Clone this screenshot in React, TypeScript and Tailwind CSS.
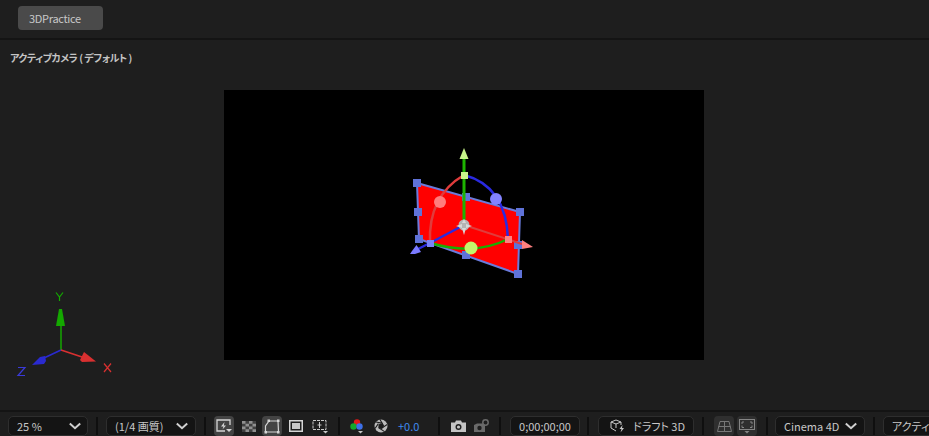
import React from "react";

function Chevron() {
  return (
    <svg width="12" height="8" viewBox="0 0 12 8" className="shrink-0">
      <path d="M0.8 1.5 L6 6.2 L11.2 1.5" fill="none" stroke="#d0d0d0" strokeWidth="2" />
    </svg>
  );
}

function Sep() {
  return <div className="h-[18px] w-[2px] shrink-0 bg-[#0f0f0f]" />;
}

function Pill({ className, children }: { className: string; children: React.ReactNode }) {
  return (
    <div className={`flex h-[20px] shrink-0 items-center rounded-[5px] border border-[#2e2e2e] bg-[#141414] text-[11px] leading-none text-[#c8c8c8] ${className}`}>
      {children}
    </div>
  );
}

function IconBox({ tone, children, className }: { tone?: "on" | "dim"; children: React.ReactNode; className?: string }) {
  const bg = tone === "on" ? "bg-[#434343]" : tone === "dim" ? "bg-[#2f2f2f]" : "";
  return (
    <div className={`flex h-[20px] w-[20px] shrink-0 items-center justify-center rounded-[4px] ${bg} ${className ?? ""}`}>
      {children}
    </div>
  );
}

function Gizmo() {
  const h = "#6a7bdc";
  const squares = [[417, 183], [520, 212], [518, 274], [419, 239], [418, 212], [466, 197], [518, 245], [466, 255]];
  return (
    <svg width="480" height="270" viewBox="224 90 480 270" className="block">
      <polygon points="417,183 520,212 518,274 419,239" fill="#ff0000" stroke={h} strokeWidth="2" />
      {squares.map(([x, y]) => (
        <rect key={`${x}-${y}`} x={x - 4} y={y - 4} width="8" height="8" fill="#5f72d8" />
      ))}
      <path d="M430 243 Q 475 256 508 239" fill="none" stroke="#17b000" strokeWidth="2.5" />
      <path d="M430 243 Q 428 196 464 175" fill="none" stroke="#e03c3c" strokeWidth="2.5" />
      <path d="M464 175 Q 506 186 508 239" fill="none" stroke="#2a2ae0" strokeWidth="2.5" />
      <line x1="464" y1="225" x2="464" y2="158" stroke="#1db400" strokeWidth="3" />
      <line x1="464" y1="225" x2="430" y2="243" stroke="#2a2ae0" strokeWidth="2.5" />
      <line x1="430" y1="243" x2="416" y2="250" stroke="#2a2ae0" strokeWidth="2.5" />
      <line x1="464" y1="225" x2="522" y2="244" stroke="#e03c3c" strokeWidth="2" />
      <polygon points="464,148 459.5,159 468.5,159" fill="#c8f58a" />
      <polygon points="410,254 412,251 416.5,245 421,252 415,254" fill="#7a7aff" />
      <polygon points="522,240 533,247 522,249" fill="#ff8080" />
      <rect x="461" y="172" width="7" height="7" fill="#c8f58a" />
      <rect x="427" y="240" width="7" height="7" fill="#7a84f8" />
      <rect x="505" y="236" width="7" height="7" fill="#ff8080" />
      <circle cx="440" cy="202" r="6" fill="#ff7d7d" />
      <circle cx="496" cy="199" r="6" fill="#8383ff" />
      <circle cx="471" cy="248" r="6.5" fill="#c3f56c" />
      <circle cx="464" cy="225" r="5.5" fill="#b4b4b4" />
      <polygon points="464,235 462,228 466,228" fill="#d8d8d8" />
      <polygon points="456,226 462,224 462,228" fill="#d8d8d8" />
      <polygon points="472,226 466,224 466,228" fill="#d8d8d8" />
      <polygon points="464,219 462,223 466,223" fill="#d8d8d8" />
    </svg>
  );
}

function Axes() {
  return (
    <svg width="100" height="90" viewBox="15 290 100 90" className="block">
      <line x1="61" y1="350" x2="61" y2="322" stroke="#14a800" strokeWidth="1.5" />
      <polygon points="59,309 62,309 65,326 56,326" fill="#14a800" />
      <line x1="61" y1="350" x2="44" y2="358" stroke="#2a2ad0" strokeWidth="1.5" />
      <polygon points="32,365 40,357 45,356 46,361 44,364" fill="#2a2ad0" />
      <line x1="61" y1="350" x2="82" y2="357" stroke="#d93030" strokeWidth="1.5" />
      <polygon points="96,361.5 84,352 80,360 82,362" fill="#d93030" />
      <path d="M56 292.5 L59.5 297 L63 292.5 M59.5 297 V301" fill="none" stroke="#14a800" strokeWidth="1.2" />
      <path d="M18 367.5 H25 L18 375.5 H25" fill="none" stroke="#3a3ad8" strokeWidth="1.2" />
      <path d="M104 363.5 L111 372 M111 363.5 L104 372" fill="none" stroke="#d93030" strokeWidth="1.2" />
    </svg>
  );
}

export default function App() {
  return (
    <div className="flex h-[436px] w-[929px] flex-col overflow-hidden bg-[#1e1e1e] font-['Noto_Sans_CJK_JP','Noto_Sans',sans-serif] [font-feature-settings:'palt']">
      <div className="flex h-[38px] shrink-0 items-center pb-[2px] pl-[18px]">
        <div className="flex h-[24px] w-[85px] items-center rounded-[4px] bg-[#4a4a4a] pl-[11px] text-[11px] leading-none tracking-[-0.3px] text-[#c8c8c8]">
          3DPractice
        </div>
      </div>
      <div className="h-[2px] shrink-0 bg-[#141414]" />

      <div className="relative flex min-h-0 flex-1 items-center justify-center pr-[1px]">
        <div className="absolute left-[10px] top-[10px] text-[10px] font-bold leading-[16px] tracking-[-0.45px] text-[#c4c4c4]">アクティブカメラ ( デフォルト )</div>
        <div className="bg-black">
          <Gizmo />
        </div>
        <div className="absolute left-[15px] top-[250px]">
          <Axes />
        </div>
      </div>

      <div className="h-[2px] shrink-0 bg-[#141414]" />
      <div className="flex h-[24px] shrink-0 items-center pl-[8px] pt-[4px]">
        <Pill className="w-[80px] justify-between pl-[8px] pr-[6px]">
          <span>25 %</span>
          <Chevron />
        </Pill>
        <div className="mx-[8px]"><Sep /></div>
        <Pill className="w-[90px] justify-between pl-[8px] pr-[7px]">
          <span>(1/4 画質)</span>
          <Chevron />
        </Pill>
        <div className="mx-[8px]"><Sep /></div>

        <IconBox tone="on">
          <svg width="16" height="14" viewBox="0 0 16 14">
            <path d="M14 6 V1 H1 V12 H9" fill="none" stroke="#d5d5d5" strokeWidth="1.3" />
            <path d="M8.5 3 L5 7.5 H7.5 L6.5 10.5 L10 6.5 H7.8 Z" fill="#d5d5d5" />
            <path d="M10 10 H16 L13 13 Z" fill="#d5d5d5" />
          </svg>
        </IconBox>
        <IconBox className="ml-[5px]">
          <svg width="14" height="11" viewBox="0 0 14 11">
            <rect width="14" height="11" fill="#3f3f3f" />
            <rect x="0" y="0" width="3.5" height="2.75" fill="#8f8f8f" />
            <rect x="7" y="0" width="3.5" height="2.75" fill="#8f8f8f" />
            <rect x="3.5" y="2.75" width="3.5" height="2.75" fill="#8f8f8f" />
            <rect x="10.5" y="2.75" width="3.5" height="2.75" fill="#8f8f8f" />
            <rect x="0" y="5.5" width="3.5" height="2.75" fill="#8f8f8f" />
            <rect x="7" y="5.5" width="3.5" height="2.75" fill="#8f8f8f" />
            <rect x="3.5" y="8.25" width="3.5" height="2.75" fill="#8f8f8f" />
            <rect x="10.5" y="8.25" width="3.5" height="2.75" fill="#8f8f8f" />
          </svg>
        </IconBox>
        <IconBox tone="on" className="ml-[3px]">
          <svg width="16" height="15" viewBox="0 0 16 15">
            <path d="M5 2 H14 L14.5 13 H1.5 V7 Z" fill="none" stroke="#d5d5d5" strokeWidth="1.2" />
            <rect x="3.5" y="0.5" width="2.5" height="2.5" fill="#d5d5d5" />
            <rect x="13" y="0.5" width="2.5" height="2.5" fill="#d5d5d5" />
            <rect x="0.5" y="12" width="2.5" height="2.5" fill="#d5d5d5" />
            <rect x="13" y="12" width="2.5" height="2.5" fill="#d5d5d5" />
          </svg>
        </IconBox>
        <IconBox className="ml-[4px]">
          <svg width="14" height="12" viewBox="0 0 14 12">
            <rect x="0.75" y="0.75" width="12.5" height="10.5" fill="none" stroke="#d5d5d5" strokeWidth="1.5" />
            <rect x="3" y="3" width="8" height="6" fill="#c8c8c8" />
          </svg>
        </IconBox>
        <IconBox className="ml-[4px]">
          <svg width="17" height="15" viewBox="0 0 17 15">
            <rect x="1" y="1.5" width="13" height="9" fill="none" stroke="#c8c8c8" strokeWidth="1" strokeDasharray="3 1" />
            <path d="M7.5 3 V9 M5.5 6 H9.5" stroke="#c8c8c8" strokeWidth="1" />
            <path d="M11 12 H16 L13.5 14.5 Z" fill="#c8c8c8" />
          </svg>
        </IconBox>
        <div className="ml-[8px] mr-[9px]"><Sep /></div>

        <svg width="17" height="16" viewBox="0 0 17 16" className="shrink-0">
          <circle cx="8" cy="4.5" r="3.2" fill="#e01818" />
          <circle cx="4.5" cy="8.5" r="3.2" fill="#12a82a" />
          <circle cx="10.5" cy="8.5" r="3.2" fill="#3d70e8" />
          <path d="M9 13 H14 L11.5 15.5 Z" fill="#c8c8c8" />
        </svg>
        <svg width="14" height="14" viewBox="0 0 14 14" className="ml-[8px] shrink-0">
          <circle cx="7" cy="7" r="6.5" fill="#bcbcbc" />
          <circle cx="7" cy="7" r="2.6" fill="#1e1e1e" />
          <path d="M6 0.5 L9.6 7 M13.2 5.5 L7 9.6 M10.5 12.6 L4.4 8.5 M1 9.5 L4.4 4.6 M2 3 L9 4.4" stroke="#1e1e1e" strokeWidth="1.1" fill="none" />
        </svg>
        <span className="ml-[10px] w-[21px] shrink-0 text-[11px] leading-none text-[#3f8cf0]">+0.0</span>
        <div className="ml-[19px] mr-[11px]"><Sep /></div>

        <svg width="15" height="12" viewBox="0 0 15 12" className="shrink-0">
          <path d="M0 2.5 H4 L5 0.5 H10 L11 2.5 H15 V12 H0 Z" fill="#c4c4c4" />
          <circle cx="7.5" cy="7" r="3" fill="#1e1e1e" />
          <circle cx="7.5" cy="7" r="1.6" fill="#c4c4c4" />
        </svg>
        <svg width="16" height="14" viewBox="0 0 16 14" className="ml-[8px] shrink-0">
          <path d="M0 6 L3 4.5 H9 L11 6 V13 H0 Z" fill="#6a6a6a" />
          <circle cx="5.5" cy="9" r="2.2" fill="#1e1e1e" />
          <circle cx="11.5" cy="3.5" r="2.7" fill="none" stroke="#6a6a6a" strokeWidth="1.5" />
        </svg>
        <div className="ml-[9px] mr-[9px]"><Sep /></div>

        <Pill className="w-[70px] justify-center">0;00;00;00</Pill>
        <div className="ml-[7px] mr-[9px]"><Sep /></div>

        <Pill className="w-[96px] pl-[11px]">
          <svg width="16" height="14" viewBox="0 0 16 14" className="shrink-0">
            <path d="M6 1 L11 3 V6 M6 1 L1 3 V9 L6 12 M1 3 L6 5 L11 3 M6 5 V9" fill="none" stroke="#c8c8c8" strokeWidth="1" />
            <path d="M12.5 6 L9.5 10 H11.5 L10.5 13.5 L14 9 H12 Z" fill="#c8c8c8" />
          </svg>
          <span className="ml-[7px]">ドラフト 3D</span>
        </Pill>
        <div className="ml-[8px] mr-[10px]"><Sep /></div>

        <IconBox tone="dim">
          <svg width="15" height="11" viewBox="0 0 15 11">
            <path d="M3 0.5 H12 L14.5 10.5 H0.5 Z M1.5 5.5 H13.5 M7.5 0.5 V10.5" fill="none" stroke="#777777" strokeWidth="1" />
          </svg>
        </IconBox>
        <IconBox tone="dim" className="ml-[3px]">
          <svg width="16" height="15" viewBox="0 0 16 15">
            <rect x="0.5" y="0.5" width="15" height="10" fill="none" stroke="#858585" strokeWidth="1" />
            <path d="M3 5 V3 H5 M11 3 H13 V5 M3 6.5 V8.5 H5 M11 8.5 H13 V6.5" fill="none" stroke="#858585" strokeWidth="1" />
            <path d="M5.5 12 H10.5 L8 14.5 Z" fill="#858585" />
          </svg>
        </IconBox>
        <div className="ml-[9px] mr-[7px]"><Sep /></div>

        <Pill className="w-[90px] justify-between pl-[8px] pr-[7px]">
          <span>Cinema 4D</span>
          <Chevron />
        </Pill>
        <div className="mx-[8px]"><Sep /></div>
        <Pill className="w-[90px] pl-[8px]">
          <span className="whitespace-nowrap">アクティブカメラ</span>
        </Pill>
      </div>
    </div>
  );
}
